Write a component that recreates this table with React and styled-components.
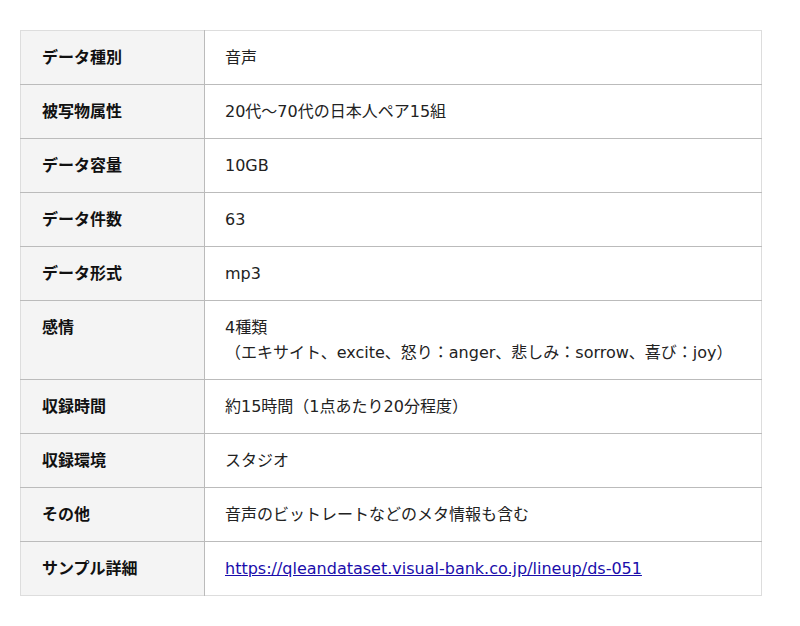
import styled, {createGlobalStyle} from 'styled-components';

const GlobalStyle = createGlobalStyle`
  body {
    margin: 0;
    background: #fff;
    font-family: "DejaVu Sans", "Noto Sans CJK JP", sans-serif;
    color: #222;
  }
`;

const Page = styled.div`
  padding: 30px 38px 30px 20px;
`;

const Table = styled.table`
  width: 100%;
  table-layout: fixed;
  border-collapse: collapse;
  border: 1px solid #ddd;
  font-size: 16px;
  line-height: 25px;
`;

const Row = styled.tr`
  border-bottom: 1px solid #bbb;
  &:last-child {
    border-bottom: 1px solid #ddd;
  }
`;

const Head = styled.th`
  width: 184px;
  box-sizing: border-box;
  padding: 14px 10px 14px 21px;
  background: #f4f4f4;
  border-right: 1px solid #bbb;
  text-align: left;
  vertical-align: top;
  font-weight: bold;
  color: #111;
`;

const Cell = styled.td`
  padding: 14px 20px;
  vertical-align: top;
  color: #222;
`;

const Emotion = styled.div`
  line-height: 25px;
`;

const Link = styled.a`
  color: #1a0dab;
  text-decoration: underline;
`;

const rows = [
  ['データ種別', '音声'],
  ['被写物属性', '20代〜70代の日本人ペア15組'],
  ['データ容量', '10GB'],
  ['データ件数', '63'],
  ['データ形式', 'mp3'],
  ['感情', 'emotion'],
  ['収録時間', '約15時間（1点あたり20分程度）'],
  ['収録環境', 'スタジオ'],
  ['その他', '音声のビットレートなどのメタ情報も含む'],
  ['サンプル詳細', 'link'],
];

const url = 'https://qleandataset.visual-bank.co.jp/lineup/ds-051';

const renderValue = (value) => {
  if (value === 'emotion') {
    return (
      <Emotion>
        4種類
        <br />
        （エキサイト、excite、怒り：anger、悲しみ：sorrow、喜び：joy）
      </Emotion>
    );
  }
  if (value === 'link') {
    return <Link href={url}>{url}</Link>;
  }
  return value;
};

const App = () => (
  <>
    <GlobalStyle />
    <Page>
      <Table>
        <tbody>
          {rows.map(([label, value]) => (
            <Row key={label}>
              <Head>{label}</Head>
              <Cell>{renderValue(value)}</Cell>
            </Row>
          ))}
        </tbody>
      </Table>
    </Page>
  </>
);

export default App;
